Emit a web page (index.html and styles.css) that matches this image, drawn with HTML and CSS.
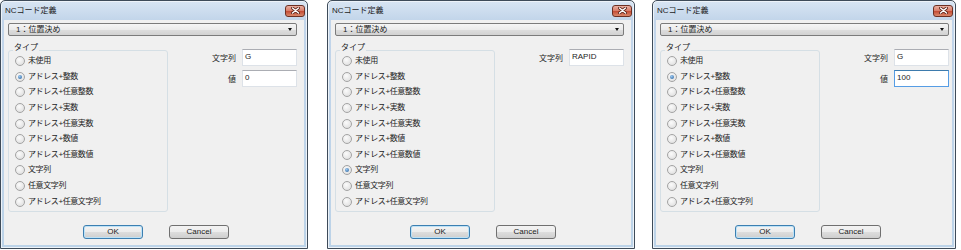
FILE: index.html
```html
<!DOCTYPE html>
<html lang="ja">
<head>
  <meta charset="UTF-8" />
  <title>NCコード定義</title>
  <link rel="stylesheet" href="styles.css">
</head>
<body>
<div class="screen">

  <!-- 1: address + integer -->
  <div class="dialog">
    <div class="titlebar">
      <span class="title">NCコード定義</span>
      <span class="close"><svg width="9" height="7" viewBox="0 0 9 7"><path d="M1.5 1 L7.5 6 M7.5 1 L1.5 6" stroke="#5b2015" stroke-width="3" stroke-linecap="round"/><path d="M1.5 1 L7.5 6 M7.5 1 L1.5 6" stroke="#fff" stroke-width="1.5" stroke-linecap="round"/></svg></span>
    </div>
    <div class="client">
      <div class="combo"><span>1：位置決め</span><span class="arrow"></span></div>
      <div class="main">
        <div class="group">
          <span class="group-label">タイプ</span>
          <div class="row first"><span class="radio"></span>未使用</div>
          <div class="row"><span class="radio on"></span>アドレス+整数</div>
          <div class="row"><span class="radio"></span>アドレス+任意整数</div>
          <div class="row"><span class="radio"></span>アドレス+実数</div>
          <div class="row"><span class="radio"></span>アドレス+任意実数</div>
          <div class="row"><span class="radio"></span>アドレス+数値</div>
          <div class="row"><span class="radio"></span>アドレス+任意数値</div>
          <div class="row"><span class="radio"></span>文字列</div>
          <div class="row"><span class="radio"></span>任意文字列</div>
          <div class="row"><span class="radio"></span>アドレス+任意文字列</div>
        </div>
        <div class="fields">
          <span class="label">文字列</span><div class="input">G</div>
          <span class="label">値</span><div class="input">0</div>
        </div>
      </div>
      <div class="buttons">
        <div class="btn default">OK</div>
        <div class="btn">Cancel</div>
      </div>
    </div>
  </div>

  <!-- 2: string -->
  <div class="dialog">
    <div class="titlebar">
      <span class="title">NCコード定義</span>
      <span class="close"><svg width="9" height="7" viewBox="0 0 9 7"><path d="M1.5 1 L7.5 6 M7.5 1 L1.5 6" stroke="#5b2015" stroke-width="3" stroke-linecap="round"/><path d="M1.5 1 L7.5 6 M7.5 1 L1.5 6" stroke="#fff" stroke-width="1.5" stroke-linecap="round"/></svg></span>
    </div>
    <div class="client">
      <div class="combo"><span>1：位置決め</span><span class="arrow"></span></div>
      <div class="main">
        <div class="group">
          <span class="group-label">タイプ</span>
          <div class="row first"><span class="radio"></span>未使用</div>
          <div class="row"><span class="radio"></span>アドレス+整数</div>
          <div class="row"><span class="radio"></span>アドレス+任意整数</div>
          <div class="row"><span class="radio"></span>アドレス+実数</div>
          <div class="row"><span class="radio"></span>アドレス+任意実数</div>
          <div class="row"><span class="radio"></span>アドレス+数値</div>
          <div class="row"><span class="radio"></span>アドレス+任意数値</div>
          <div class="row"><span class="radio on"></span>文字列</div>
          <div class="row"><span class="radio"></span>任意文字列</div>
          <div class="row"><span class="radio"></span>アドレス+任意文字列</div>
        </div>
        <div class="fields">
          <span class="label">文字列</span><div class="input">RAPID</div>
        </div>
      </div>
      <div class="buttons">
        <div class="btn default">OK</div>
        <div class="btn">Cancel</div>
      </div>
    </div>
  </div>

  <!-- 3: address + integer, value focused -->
  <div class="dialog narrow">
    <div class="titlebar">
      <span class="title">NCコード定義</span>
      <span class="close"><svg width="9" height="7" viewBox="0 0 9 7"><path d="M1.5 1 L7.5 6 M7.5 1 L1.5 6" stroke="#5b2015" stroke-width="3" stroke-linecap="round"/><path d="M1.5 1 L7.5 6 M7.5 1 L1.5 6" stroke="#fff" stroke-width="1.5" stroke-linecap="round"/></svg></span>
    </div>
    <div class="client">
      <div class="combo"><span>1：位置決め</span><span class="arrow"></span></div>
      <div class="main">
        <div class="group">
          <span class="group-label">タイプ</span>
          <div class="row first"><span class="radio"></span>未使用</div>
          <div class="row"><span class="radio on"></span>アドレス+整数</div>
          <div class="row"><span class="radio"></span>アドレス+任意整数</div>
          <div class="row"><span class="radio"></span>アドレス+実数</div>
          <div class="row"><span class="radio"></span>アドレス+任意実数</div>
          <div class="row"><span class="radio"></span>アドレス+数値</div>
          <div class="row"><span class="radio"></span>アドレス+任意数値</div>
          <div class="row"><span class="radio"></span>文字列</div>
          <div class="row"><span class="radio"></span>任意文字列</div>
          <div class="row"><span class="radio"></span>アドレス+任意文字列</div>
        </div>
        <div class="fields">
          <span class="label">文字列</span><div class="input">G</div>
          <span class="label">値</span><div class="input focus">100</div>
        </div>
      </div>
      <div class="buttons">
        <div class="btn default">OK</div>
        <div class="btn">Cancel</div>
      </div>
    </div>
  </div>

</div>
</body>
</html>
```

FILE: styles.css
```css
body {
  margin: 0;
  background: #fff;
  font-family: "Liberation Sans", "Noto Sans CJK JP", sans-serif;
  font-size: 8px;
  color: #1c1c1c;
}

.screen {
  display: flex;
  height: 250px;
}

.dialog {
  width: 308px;
  height: 249px;
  box-sizing: border-box;
  border: 1px solid #3e4b59;
  border-radius: 5px 5px 0 0;
  background: linear-gradient(#d8e5f3, #c2d5ea 19px, #bcd3e8);
  box-shadow: inset 0 0 0 1px #edf3f9;
  display: flex;
  flex-direction: column;
}

.dialog + .dialog {
  margin-left: 19px;
}

.dialog.narrow {
  width: 304px;
  margin-left: 17px;
}

.titlebar {
  height: 19px;
  display: flex;
  align-items: center;
  justify-content: space-between;
  padding: 0 2px 0 4px;
}

.title {
  line-height: 10px;
}

.close {
  width: 20px;
  height: 12px;
  box-sizing: border-box;
  border: 1px solid #6d3023;
  border-radius: 3px;
  background: linear-gradient(#eab0a2, #d77a66 50%, #c44a33 51%, #d9886b);
  display: flex;
  align-items: center;
  justify-content: center;
}

.client {
  flex: 1;
  margin: 0 3px 3px;
  background: #f0f0f0;
  padding: 3px 7px 0 4px;
  display: flex;
  flex-direction: column;
}

.narrow .client {
  padding-right: 3px;
}

.combo {
  height: 13px;
  box-sizing: border-box;
  border: 1px solid #7b7b7b;
  border-radius: 2px;
  background: linear-gradient(#f5f5f5, #ebebeb 50%, #dedede 51%, #d2d2d2);
  display: flex;
  align-items: center;
  justify-content: space-between;
  padding: 0 4px 0 7px;
  line-height: 10px;
}

.arrow {
  width: 0;
  height: 0;
  border-left: 2.5px solid transparent;
  border-right: 2.5px solid transparent;
  border-top: 3px solid #111;
}

.main {
  display: flex;
  margin-top: 14px;
}

.group {
  position: relative;
  width: 160px;
  height: 162px;
  box-sizing: border-box;
  border: 1px solid #d5dfe5;
  border-radius: 3px;
  padding: 2px 0 0 6px;
}

.group-label {
  position: absolute;
  top: -8px;
  left: 4px;
  padding: 0 1px;
  background: #f0f0f0;
  line-height: 9px;
}

.row {
  height: 15.6px;
  display: flex;
  align-items: center;
  gap: 3px;
  line-height: 10px;
  letter-spacing: -0.4px;
}

.row.first {
  height: 16px;
}

.radio {
  width: 10px;
  height: 10px;
  box-sizing: border-box;
  border: 1px solid #a3a3a3;
  border-radius: 50%;
  background: radial-gradient(circle at 40% 35%, #fbfbfb, #dadada);
  display: flex;
  align-items: center;
  justify-content: center;
}

.radio.on::after {
  content: "";
  width: 4px;
  height: 4px;
  border-radius: 50%;
  background: radial-gradient(circle at 40% 35%, #9cc8ef, #1f5c9c);
}

.fields {
  display: grid;
  grid-template-columns: 68px 55px;
  column-gap: 6px;
  row-gap: 4px;
  align-content: start;
  margin-top: -1px;
}

.label {
  justify-self: end;
  align-self: center;
  line-height: 10px;
  margin-top: 2px;
}

.input {
  height: 17px;
  box-sizing: border-box;
  background: #fff;
  border: 1px solid #dde2e8;
  border-top-color: #abadb3;
  padding: 2px 2px 0;
  line-height: 9px;
}

.input.focus {
  border-color: #569de5;
  border-top-color: #3d7bad;
}

.buttons {
  display: flex;
  gap: 26px;
  padding-left: 75px;
  margin-top: 13px;
}

.btn {
  width: 60px;
  height: 14px;
  box-sizing: border-box;
  border: 1px solid #707070;
  border-radius: 3px;
  background: linear-gradient(#f3f3f3, #ececec 50%, #dddddd 51%, #cfcfcf);
  display: flex;
  align-items: center;
  justify-content: center;
  line-height: 10px;
}

.btn.default {
  border-color: #3c7fb1;
  box-shadow: inset 0 0 0 1px #bde2f7;
}
```
